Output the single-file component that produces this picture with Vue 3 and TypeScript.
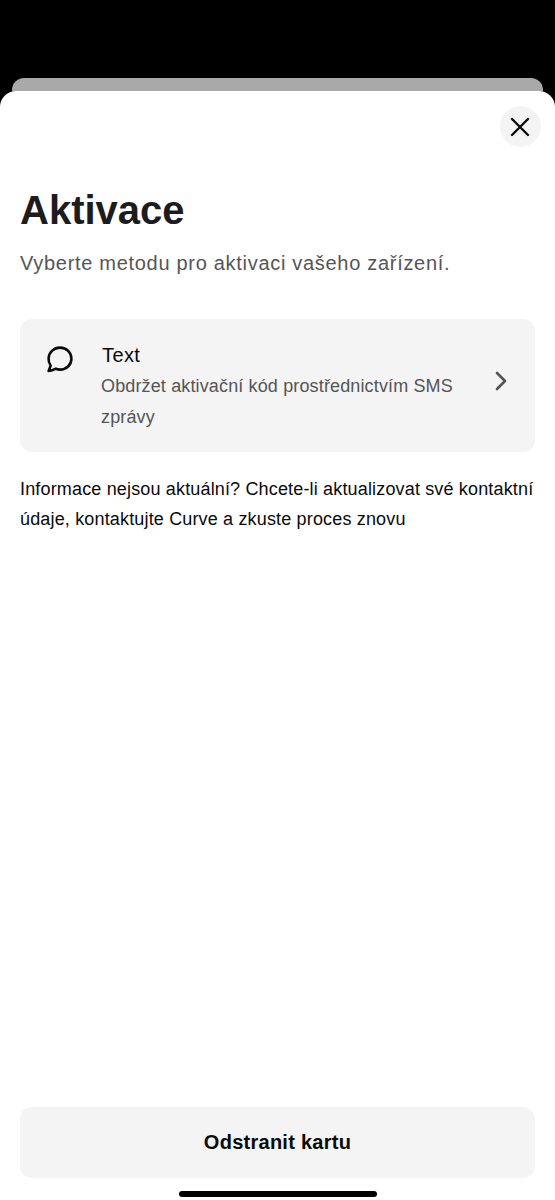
<script setup lang="ts">
const title = 'Aktivace'
</script>

<template>
  <div class="page">
    <div class="peek"></div>
    <main class="sheet">
      <div class="top">
        <button class="close" aria-label="Zavřít">
          <svg width="20" height="20" viewBox="0 0 20 20" fill="none" stroke="#0a0a0a" stroke-width="2.4" stroke-linecap="round">
            <path d="M2 2 18 18M18 2 2 18" />
          </svg>
        </button>
      </div>
      <h1>{{ title }}</h1>
      <p class="sub">Vyberte metodu pro aktivaci vašeho zařízení.</p>
      <div class="option">
        <svg class="bubble" width="28" height="28" viewBox="0 0 28 28" fill="none" stroke="#0a0a0a" stroke-width="2.6" stroke-linejoin="round">
          <path d="M2.6 26 C3.4 23.6 4.4 22 4.6 20.4 C3 18.2 2.4 16 2.6 13.4 C3 7 8 2.6 14 2.6 C20.6 2.6 25.4 7.8 25.4 13.8 C25.4 20 20.4 24.6 14 24.6 C12.4 24.6 11 24.2 9.8 23.7 C7.6 25 5.4 25.8 2.6 26 Z" />
        </svg>
        <div class="option-text">
          <div class="option-title">Text</div>
          <div class="option-desc">Obdržet aktivační kód prostřednictvím SMS zprávy</div>
        </div>
        <svg class="chev" width="14" height="20" viewBox="0 0 14 20" fill="none" stroke="#555" stroke-width="2.6" stroke-linecap="round" stroke-linejoin="round">
          <path d="M3 2 11 10 3 18" />
        </svg>
      </div>
      <p class="info">Informace nejsou aktuální? Chcete-li aktualizovat své kontaktní údaje, kontaktujte Curve a zkuste proces znovu</p>
      <button class="remove">Odstranit kartu</button>
      <div class="home"></div>
    </main>
  </div>
</template>

<style>
html, body { margin: 0; background: #000; }
</style>

<style scoped>
.page {
  width: 555px;
  height: 1200px;
  padding-top: 78px;
  box-sizing: border-box;
  display: flex;
  flex-direction: column;
  background: #000;
  overflow: hidden;
  font-family: "Liberation Sans", Arial, sans-serif;
}
.peek {
  height: 13px;
  margin: 0 12px;
  background: #a9a9a9;
  border-radius: 12px 12px 0 0;
  flex: none;
}
.sheet {
  flex: 1;
  display: flex;
  flex-direction: column;
  background: #fff;
  border-radius: 16px 16px 0 0;
  padding: 15px 20px 3px;
  min-height: 0;
}
.top {
  display: flex;
  justify-content: flex-end;
  margin-right: -6px;
}
.close {
  width: 41px;
  height: 41px;
  border: 0;
  padding: 0;
  border-radius: 50%;
  background: #f4f4f4;
  display: flex;
  align-items: center;
  justify-content: center;
}
.close svg {
  margin-right: 1px;
}
h1 {
  margin: 40px 0 0;
  font-size: 40px;
  line-height: 46px;
  font-weight: 700;
  color: #1c1c1c;
}
.sub {
  margin: 15px 0 0;
  font-size: 20px;
  line-height: 30px;
  letter-spacing: 0.7px;
  color: #555;
}
.option {
  margin-top: 41px;
  height: 133px;
  box-sizing: border-box;
  background: #f4f4f4;
  border-radius: 12px;
  display: flex;
  align-items: flex-start;
  padding: 23px 27px 0 26px;
}
.bubble {
  flex: none;
  margin-top: 3px;
}
.option-text {
  margin-left: 27px;
  width: 366px;
  flex: none;
}
.option-title {
  font-size: 20px;
  line-height: 26px;
  letter-spacing: 0.4px;
  color: #0a0a0a;
  margin-left: 1px;
}
.option-desc {
  font-size: 18px;
  line-height: 31px;
  letter-spacing: 0.14px;
  color: #555;
  margin-top: 3px;
}
.chev {
  margin-left: auto;
  margin-top: 29px;
  flex: none;
}
.info {
  margin: 22px 0 0;
  font-size: 18px;
  line-height: 30px;
  letter-spacing: 0.16px;
  color: #0a0a0a;
}
.remove {
  margin-top: auto;
  height: 71px;
  flex: none;
  border: 0;
  border-radius: 12px;
  background: #f4f4f4;
  font-family: inherit;
  font-size: 20px;
  font-weight: 700;
  letter-spacing: 0.26px;
  color: #0a0a0a;
}
.home {
  flex: none;
  width: 198px;
  height: 6px;
  margin: 13px auto 0;
  border-radius: 3px;
  background: #000;
}
</style>
